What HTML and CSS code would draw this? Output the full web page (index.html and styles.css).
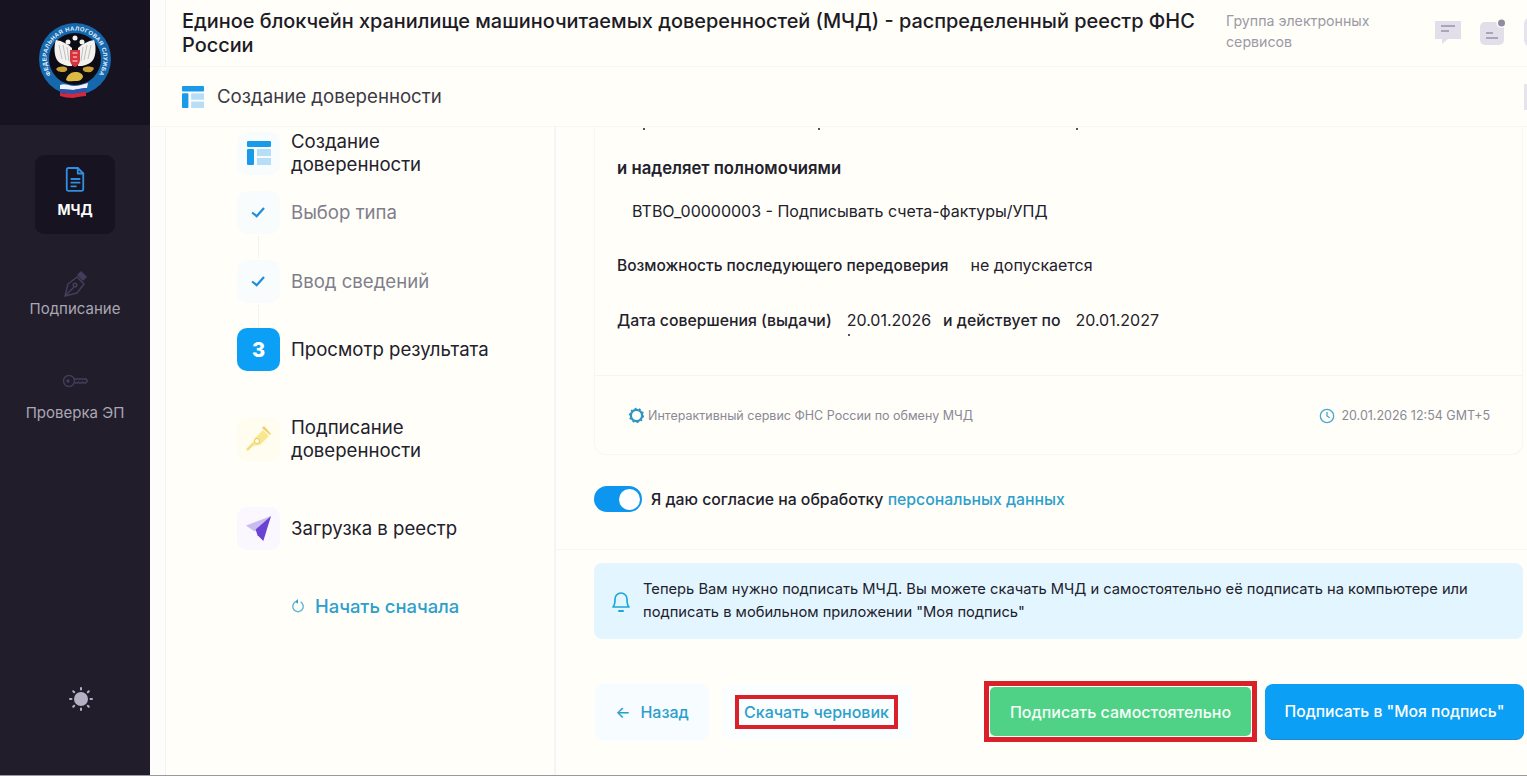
FILE: index.html
```html
<!DOCTYPE html>
<html lang="ru">
<head>
<meta charset="utf-8">
<title>МЧД</title>
<link rel="stylesheet" href="styles.css">
</head>
<body>
<div class="app">
  <aside class="sidebar">
    <div class="logo-box">
      <svg class="logo" viewBox="0 0 80 80" width="80" height="80">
        <defs><path id="ring" d="M20.700 57 A28.500 28.500 0 1 1 59.300 57"/></defs>
        <circle cx="40" cy="36" r="36" fill="#1568ae"/>
        <circle cx="40" cy="36" r="26" fill="#0d0b14"/>
        <text class="logo-text"><textPath href="#ring" startOffset="50%" text-anchor="middle">ФЕДЕРАЛЬНАЯ НАЛОГОВАЯ СЛУЖБА</textPath></text>
        <path d="M37 25C33 21 27 18 21 17c-2 5-2 13 0 18 2 5 7 7 12 8l4 0z" fill="#f4f2ef"/>
        <path d="M43 25c4-4 10-7 16-8 2 5 2 13 0 18-2 5-7 7-12 8l-4 0z" fill="#f4f2ef"/>
        <path d="M24 22l3 14M28 22l3 15M32 24l2 14M56 22l-3 14M52 22l-3 15M48 24l-2 14" stroke="#a9a8ad" stroke-width=".7"/>
        <circle cx="33" cy="19" r="2.500" fill="#f4f2ef"/><circle cx="47" cy="19" r="2.500" fill="#f4f2ef"/>
        <circle cx="40" cy="15" r="2.500" fill="#f4f2ef"/>
        <path d="M35 27h10v10c0 3-2 6-5 7-3-1-5-4-5-7z" fill="#d8333d"/>
        <path d="M37.500 30h5M38 34h4M37.500 38h5" stroke="#f4e9e2" stroke-width="1.200"/>
        <path d="M21 46c3-3 8-3 11-1 1 2-1 4-4 4s-5 0-7-3zM48 45c3-2 8-2 11 0-1 3-3 5-7 4-3 0-5-2-4-4z" fill="#c9a033"/>
        <path d="M31 57c1-5 5-8 9-8 5 0 8 2 8 5-2 4-4 4-9 4-3 0-6 1-8-1z" fill="#dcb945"/>
        <path d="M25 62c5-2 9 1 14 1 5 0 9-2 14-3l-1 5c-5 0-9 1-14 2-5 0-9-1-13-1z" fill="#f1f3f8"/>
        <path d="M25 66c5 0 9 1 14 1 5-1 9-2 13-2l-1 4c-4 0-8 1-13 2-5 0-9-1-13-1z" fill="#3052a8"/>
        <path d="M25 70c4 0 8 1 13 1 5-1 9-2 13-2l0 4c-4 0-8 1-13 2-5 0-9-1-13-2z" fill="#d3293a"/>
      </svg>
    </div>
    <nav class="nav">
      <a class="nav-item is-active">
        <svg class="nav-icon" viewBox="0 0 24 28" width="22" height="26" fill="none" stroke="#2f8fe0" stroke-width="2" stroke-linecap="round" stroke-linejoin="round"><path d="M3 4a2 2 0 0 1 2-2h10l6 6v17a2 2 0 0 1-2 2H5a2 2 0 0 1-2-2z"/><path d="M15 2v6h6M8 14h9M8 18h9M8 22h5"/></svg>
        <span>МЧД</span>
      </a>
      <a class="nav-item nav-sign">
        <svg class="nav-icon" viewBox="0 0 24 26" width="24" height="26" fill="none" stroke="#423e5c" stroke-width="1.500" stroke-linejoin="round"><path d="M2 25l3-12 9-7 7 7-7 9z"/><path d="M2 25l9-9"/><circle cx="12" cy="14" r="1.800"/><path d="M15 4l3-3 5 5-3 3z" fill="#423e5c"/></svg>
        <span>Подписание</span>
      </a>
      <a class="nav-item nav-check">
        <svg class="nav-icon" viewBox="0 0 26 14" width="26" height="14" fill="none" stroke="#423e5c" stroke-width="1.400"><circle cx="7" cy="7" r="5.500"/><circle cx="6" cy="7" r="1" fill="#423e5c"/><path d="M12 5h12l1.500 2-2 2h-2l-1-1-1 1h-2l-1-1-1 1h-3"/></svg>
        <span>Проверка ЭП</span>
      </a>
    </nav>
    <div class="theme">
      <svg viewBox="0 0 26 26" width="26" height="26" fill="#b3b1c3"><circle cx="13" cy="13" r="7"/><g stroke="#b3b1c3" stroke-width="2" stroke-linecap="round"><path d="M13 2v1.500M13 22.500V24M2 13h1.500M22.500 13H24M5.200 5.200l1 1M19.800 19.800l1 1M5.200 20.800l1-1M19.800 6.200l1-1"/></g></svg>
    </div>
  </aside>

  <main class="main">
    <header class="topbar">
      <h1 class="title">Единое блокчейн хранилище машиночитаемых доверенностей (МЧД) - распределенный реестр ФНС России</h1>
      <div class="org">Группа электронных сервисов</div>
      <div class="top-icons">
        <svg viewBox="0 0 26 26" width="26" height="26"><path d="M0 2h26v18H13l-6 5v-5H0z" fill="#e2dfeb"/><path d="M6 7h14M6 12h8" stroke="#a9a6b8" stroke-width="1.800"/></svg>
        <svg viewBox="0 0 28 28" width="28" height="28"><rect x="1" y="4" width="24" height="23" rx="5" fill="#e2dfeb"/><path d="M7 15h7M7 20h12" stroke="#a9a6b8" stroke-width="1.800"/><circle cx="22.500" cy="5" r="5" fill="#fffef9"/><circle cx="22.500" cy="5" r="3.500" fill="#8f8d9f"/></svg>
        <span class="avatar"></span>
      </div>
    </header>
    <div class="subbar">
      <svg class="table-icon" viewBox="0 0 24 24" width="22" height="22"><rect width="24" height="6" y="0" rx="1" fill="#1a9bea"/><rect y="8" width="7" height="16" rx="1" fill="#1a9bea"/><rect x="10" y="8" width="14" height="7" fill="#b7def7"/><rect x="10" y="17" width="14" height="7" fill="#b7def7"/></svg>
      <span class="subbar-text">Создание доверенности</span>
      <span class="subbar-btn"></span>
    </div>
    <div class="workspace">
      <section class="steps">
        <ol class="step-list">
          <li class="step step-1">
            <span class="badge badge-blue"><svg viewBox="0 0 24 24" width="24" height="24"><rect width="24" height="6" rx="1" fill="#1a9bea"/><rect y="8" width="7" height="16" rx="1" fill="#1a9bea"/><rect x="10" y="8" width="14" height="7" fill="#b7def7"/><rect x="10" y="17" width="14" height="7" fill="#b7def7"/></svg></span>
            <span class="step-text">Создание<br>доверенности</span>
          </li>
          <li class="step step-2 is-done line">
            <span class="badge badge-blue"><svg viewBox="0 0 16 12" width="15" height="11" fill="none" stroke="#1f8fd6" stroke-width="2.400"><path d="M1 6l5 4 8-9"/></svg></span>
            <span class="step-text">Выбор типа</span>
          </li>
          <li class="step step-3 is-done line">
            <span class="badge badge-blue"><svg viewBox="0 0 16 12" width="15" height="11" fill="none" stroke="#1f8fd6" stroke-width="2.400"><path d="M1 6l5 4 8-9"/></svg></span>
            <span class="step-text">Ввод сведений</span>
          </li>
          <li class="step step-4">
            <span class="badge badge-current">3</span>
            <span class="step-text">Просмотр результата</span>
          </li>
          <li class="step step-5">
            <span class="badge badge-yellow"><svg viewBox="0 0 26 26" width="26" height="26"><path d="M1 24L10 15" stroke="#f4dc80" stroke-width="2.500"/><path d="M8 13l9-9 6 6-9 9-7 1z" fill="#f9e78f"/><circle cx="11" cy="15" r="2.500" fill="#fffef9" stroke="#ecc95d"/><path d="M16 2l8 7 1-1-7-8z" fill="#efcf68"/></svg></span>
            <span class="step-text">Подписание<br>доверенности</span>
          </li>
          <li class="step step-6">
            <span class="badge badge-violet"><svg viewBox="0 0 28 28" width="27" height="27"><path d="M1 11L27 1 10 17z" fill="#c9bdf0"/><path d="M27 1L19 27 13 21 11 15z" fill="#6a43d2"/></svg></span>
            <span class="step-text">Загрузка в реестр</span>
          </li>
        </ol>
        <a class="restart">
          <svg viewBox="0 0 16 18" width="14" height="16" fill="none" stroke="#2d9fcb" stroke-width="1.600"><path d="M5 4.300a6 6 0 1 0 6 0" stroke="#5cb7d8"/><path d="M8 1L4.500 4 8 6.500z" fill="#2d9fcb" stroke="none"/></svg>
          Начать сначала
        </a>
      </section>

      <section class="content">
        <div class="card">
          <i class="speck speck-a"></i><i class="speck speck-b"></i><i class="speck speck-c"></i><i class="speck speck-d"></i>
          <p class="line line-head">и наделяет полномочиями</p>
          <p class="line line-power">ВТВО_00000003 - Подписывать счета-фактуры/УПД</p>
          <p class="line line-field line-wide"><b>Возможность последующего передоверия</b><span>не допускается</span></p>
          <p class="line line-field"><b>Дата совершения (выдачи)</b><span>20.01.2026</span><b>и действует по</b><span>20.01.2027</span></p>
          <div class="card-foot">
            <span class="foot-left">
              <svg viewBox="0 0 18 18" width="17" height="17" fill="none" stroke="#2b96c4" stroke-width="2.400"><circle cx="9" cy="9" r="6"/><circle cx="9" cy="9" r="7.300" stroke-width="1.600" stroke-dasharray="2 2.600"/></svg>
              Интерактивный сервис ФНС России по обмену МЧД
            </span>
            <span class="foot-right">
              <svg viewBox="0 0 18 18" width="16" height="16" fill="none" stroke="#4aa7d2" stroke-width="1.500"><circle cx="9" cy="9" r="7.500"/><path d="M9 4.500V9l3 2"/></svg>
              20.01.2026 12:54 GMT+5
            </span>
          </div>
        </div>
        <div class="consent">
          <span class="toggle"><span class="knob"></span></span>
          <span>Я даю согласие на обработку <a class="link">персональных данных</a></span>
        </div>
        <div class="bottom">
          <div class="notice">
            <svg viewBox="0 0 20 24" width="20" height="24" fill="none" stroke="#1ba8d8" stroke-width="1.700" stroke-linejoin="round"><path d="M2 18c2-2 2-4 2-8a6 6 0 0 1 12 0c0 4 0 6 2 8z"/><path d="M8 22h4" stroke-width="2" stroke-linecap="round"/></svg>
            <p>Теперь Вам нужно подписать МЧД. Вы можете скачать МЧД и самостоятельно её подписать на компьютере или подписать в мобильном приложении "Моя подпись"</p>
          </div>
          <div class="actions">
            <a class="btn btn-back"><span class="arrow">←</span> Назад</a>
            <span class="draft-wrap"><a class="draft">Скачать черновик</a></span>
            <span class="sign-frame"><a class="btn btn-green">Подписать самостоятельно</a></span>
            <a class="btn btn-blue">Подписать в "Моя подпись"</a>
          </div>
        </div>
      </section>
    </div>
  </main>
</div>
</body>
</html>
```

FILE: styles.css
```css
* { box-sizing: border-box; }
html, body { margin: 0; padding: 0; }
body {
  width: 1527px;
  height: 776px;
  overflow: hidden;
  font-family: Inter, "Noto Sans", "Liberation Sans", sans-serif;
  color: #1d1c28;
  background: #fffef9;
}
p, h1, ol { margin: 0; padding: 0; }
.app {
  display: grid;
  grid-template-columns: 150px 1fr;
  height: 776px;
  border-bottom: 1px solid #9a9a9e;
  overflow: hidden;
}

/* sidebar */
.sidebar {
  display: flex;
  flex-direction: column;
  background: #211d2b;
  color: #a9a7b4;
}
.logo-box {
  height: 125px;
  flex: none;
  background: #171320;
  display: flex;
  justify-content: center;
  padding-top: 23px;
}
.logo-text { font: 700 5.900px "Liberation Sans", sans-serif; fill: #e8f1fa; letter-spacing: .35px; }
.nav {
  display: flex;
  flex-direction: column;
  align-items: center;
  padding-top: 30px;
}
.nav-item {
  width: 100px;
  display: flex;
  flex-direction: column;
  align-items: center;
  font-size: 15px;
  line-height: 20px;
  white-space: nowrap;
}
.nav-item.is-active {
  width: 80px;
  height: 79px;
  padding-top: 11px;
  background: #171320;
  border-radius: 9px;
  color: #fff;
  font-weight: 700;
  font-size: 14px;
}
.nav-item.is-active span { margin-top: 8px; }
.nav-sign { margin-top: 37px; }
.nav-sign span { margin-top: 2px; }
.nav-check { margin-top: 55px; }
.nav-check span { margin-top: 15px; }
.theme {
  margin-top: auto;
  padding-bottom: 63px;
  display: flex;
  justify-content: center;
  padding-left: 12px;
}

/* main */
.main {
  display: flex;
  flex-direction: column;
  min-width: 0;
  background: #fffef9;
}
.topbar {
  height: 67px;
  flex: none;
  display: flex;
  align-items: flex-start;
  padding-left: 32px;
  border-bottom: 1px solid #f7f6f0;
  background: linear-gradient(90deg, #fdfdfc 15px, #f5f2f2 15px, #f5f2f2 16px, #fffef9 16px);
}
.title {
  width: 1030px;
  flex: none;
  font-size: 19.920px;
  font-weight: 500;
  line-height: 24px;
  padding-top: 9px;
  color: #1c1b26;
}
.org {
  width: 175px;
  flex: none;
  margin-left: 14px;
  padding-top: 10px;
  font-size: 14.200px;
  line-height: 21px;
  color: #9b9aa6;
}
.top-icons {
  display: flex;
  align-items: center;
  gap: 18px;
  padding-top: 17px;
  margin-left: 34px;
}
.avatar {
  width: 30px;
  height: 30px;
  flex: none;
  margin-left: -1px;
  border-radius: 7px;
  background: #e6e3ee;
}
.subbar {
  height: 60px;
  flex: none;
  display: flex;
  align-items: center;
  padding-left: 32px;
  border-bottom: 1px solid #f7f6f0;
}
.table-icon { flex: none; }
.subbar-text {
  margin: 0 0 2px 13px;
  font-size: 18.650px;
  color: #3a3944;
}
.subbar-btn {
  margin-left: auto;
  width: 3px;
  height: 26px;
  background: #e6e3ee;
}
.workspace {
  flex: 1;
  min-height: 0;
  display: grid;
  grid-template-columns: 406px 1fr;
}

/* steps */
.steps {
  padding: 3px 0 0 87px;
  border-right: 2px solid #f2f6f6;
  background: linear-gradient(90deg, #fdfdfc 15px, #f5f2f2 15px, #f5f2f2 16px, #fffef9 16px);
}
.step-list {
  list-style: none;
  display: flex;
  flex-direction: column;
}
.step {
  display: flex;
  align-items: center;
  gap: 11px;
  min-height: 43px;
  position: relative;
}
.step-text {
  font-size: 18.600px;
  line-height: 23px;
  color: #22212c;
}
.is-done .step-text { color: #7f7e8c; }
.step-2 { margin-top: 15px; }
.step-3 { margin-top: 26px; }
.step-4 { margin-top: 25px; }
.step-5 { margin-top: 45px; }
.step-6 { margin-top: 45px; }
.step.line::after {
  content: "";
  position: absolute;
  left: 21px;
  top: 45px;
  height: 22px;
  border-left: 1px dotted #e8ebee;
}
.badge {
  width: 43px;
  height: 43px;
  flex: none;
  display: flex;
  align-items: center;
  justify-content: center;
  border-radius: 10px;
}
.badge-blue { background: #f8fcfd; }
.badge-yellow { background: #fffdf0; }
.badge-violet { background: #faf7ff; }
.badge-current {
  background: #0ba0f6;
  color: #fff;
  font-weight: 800;
  font-size: 20px;
}
.restart {
  display: flex;
  align-items: center;
  gap: 10px;
  margin: 44px 0 0 54px;
  font-size: 18.400px;
  font-weight: 500;
  line-height: 24px;
  color: #2d9fcb;
}

/* content */
.content {
  display: flex;
  flex-direction: column;
  min-width: 0;
  overflow: hidden;
}
.card {
  position: relative;
  height: 328px;
  margin: 0 4px 0 38px;
  padding: 30px 0 0 22px;
  border: 1px solid #f7f6f0;
  border-top: 0;
  border-radius: 0 0 12px 12px;
}
.speck {
  position: absolute;
  width: 2px;
  height: 2px;
  background: #55545e;
  top: 1px;
}
.speck-a { left: 48px; }
.speck-b { left: 223px; }
.speck-c { left: 481px; }
.speck-d { left: 253px; top: 207px; }
.line {
  font-size: 16px;
  line-height: 22px;
  white-space: nowrap;
  color: #22212c;
}
.line-head { font-weight: 600; font-size: 16.700px; }
.line-power { margin-top: 21px; padding-left: 15px; }
.line-field { margin-top: 32px; display: flex; align-items: baseline; }
.line-field b { font-weight: 500; font-size: 15.800px; }
.line-field span { margin: 0 12px 0 15px; }
.line-wide b { font-size: 15.500px; }
.line-wide span { margin-left: 22px; }
.card-foot {
  position: absolute;
  left: 0;
  right: 0;
  top: 248px;
  height: 80px;
  display: flex;
  align-items: center;
  justify-content: space-between;
  padding: 0 32px 0 33px;
  border-top: 1px solid #f5f4ee;
  font-size: 12.500px;
  color: #8a8996;
}
.foot-left, .foot-right { display: flex; align-items: center; gap: 3px; }
.foot-right { gap: 6px; }
.consent {
  height: 94px;
  flex: none;
  display: flex;
  align-items: center;
  gap: 9px;
  margin-left: 38px;
  padding-bottom: 6px;
  font-size: 15.800px;
  font-weight: 500;
  color: #22212c;
}
.toggle {
  width: 48px;
  height: 26px;
  flex: none;
  display: flex;
  align-items: center;
  justify-content: flex-end;
  padding-right: 2px;
  background: #0d96f0;
  border-radius: 13px;
}
.knob {
  width: 21px;
  height: 21px;
  border-radius: 50%;
  background: #fff;
}
.link { color: #2d9fcb; }
.bottom {
  flex: 1;
  border-top: 1px solid #f7f6f0;
  padding: 13px 4px 0 38px;
}
.notice {
  height: 76px;
  display: flex;
  align-items: center;
  gap: 12px;
  padding-left: 17px;
  background: #e3f6ff;
  border-radius: 8px;
  font-size: 14.700px;
  line-height: 23px;
  color: #22212c;
}
.notice svg { flex: none; }
.notice p { width: 850px; }
.actions {
  display: flex;
  align-items: center;
  margin: 44px -1px 0 1px;
  height: 57px;
}
.btn {
  display: flex;
  align-items: center;
  justify-content: center;
  flex: none;
  font-size: 16px;
  font-weight: 500;
  border-radius: 8px;
  white-space: nowrap;
}
.btn-back {
  width: 114px;
  height: 56px;
  gap: 6px;
  background: #f6fcff;
  color: #2d9fcb;
}
.arrow { font-size: 16px; margin-right: 4px; }
.draft-wrap {
  width: 190px;
  height: 56px;
  flex: none;
  margin-left: 13px;
  padding-left: 13px;
  display: flex;
  align-items: center;
  background: #fbfefe;
  border-radius: 8px;
}
.draft {
  width: 163px;
  height: 34px;
  display: flex;
  align-items: center;
  justify-content: center;
  border: 4px solid #d9202b;
  font-size: 16px;
  font-weight: 500;
  color: #2d9fcb;
  white-space: nowrap;
}
.sign-frame {
  flex: none;
  margin-left: auto;
  width: 273px;
  height: 61px;
  padding: 1px;
  border: 5px solid #d9202b;
  background: #fbfdf9;
  display: flex;
}
.btn-green {
  flex: 1;
  background: #4fd286;
  color: #f5fff8;
  border-radius: 5px;
}
.btn-blue {
  width: 259px;
  height: 55px;
  margin-left: 8px;
  background: #0ba0f6;
  color: #fff;
  font-size: 15.700px;
  box-shadow: 0 1px 0 #2288c9;
}
```
